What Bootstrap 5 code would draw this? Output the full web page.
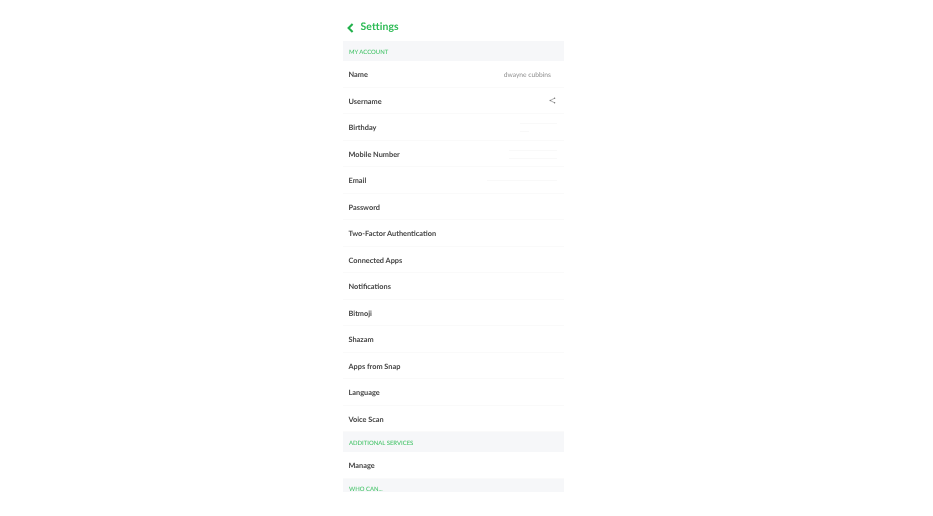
<!DOCTYPE html>
<html lang="en">
<head>
<meta charset="utf-8">
<title>Settings</title>
<link href="https://cdn.jsdelivr.net/npm/bootstrap@5.3.0/dist/css/bootstrap.min.css" rel="stylesheet">
<style>
html,body{height:516px;overflow:hidden;background:#fff}
body{font-family:"Lato","Noto Sans",sans-serif;text-rendering:geometricPrecision}
.phone-pane{width:221px;margin-left:343px;height:492px;overflow:hidden;filter:blur(.25px)}
.top-bar{height:41px;padding:14px 0 0 4px;color:#2dbb55}
.top-title{font-size:10.4px;letter-spacing:.1px;font-weight:700;margin-left:6.5px}
.sec-head{background:#f6f7f9;color:#46c46a;font-size:5.95px;height:20px;padding:2px 0 0 6px;line-height:20px;text-transform:uppercase;font-weight:500}
.sec-head-cut{height:14px;line-height:18px}
.set-row{height:26.5px;padding:2px 13px 0 5.5px;color:#444;font-size:7.35px;border-bottom:1px solid #fafafa;font-weight:700}
.set-row:last-of-type{border-bottom:0}
.set-val{color:#8f8f8f;font-size:6.7px;font-weight:400}
.share-ico{margin-right:-5px;margin-top:-2px}
.ghost-stack{gap:7px;margin-right:-6px}
.ghost-txt{display:block;height:1px;background:#f9f9f9}
.gw-a{width:37px}
.gw-b{width:9px}
.gw-c{width:48px}
.gw-d{width:70px}
</style>
</head>
<body>
<main class="phone-pane">
  <div class="top-bar d-flex align-items-center">
    <svg width="7" height="10" viewBox="0 0 7 10" aria-hidden="true"><path d="M5.6 1 1.6 5l4 4" fill="none" stroke="#22b14c" stroke-width="2.1"/></svg>
    <span class="top-title">Settings</span>
  </div>
  <div class="sec-head">My Account</div>
  <div class="set-row d-flex align-items-center justify-content-between"><span>Name</span><span class="set-val">dwayne cubbins</span></div>
  <div class="set-row d-flex align-items-center justify-content-between"><span>Username</span>
    <svg class="share-ico" width="7" height="7" viewBox="0 0 7 7" aria-hidden="true"><path d="M5.6 1.2 1.2 3.5 5.6 5.8" fill="none" stroke="#777" stroke-width=".6"/><circle cx="5.6" cy="1.2" r=".7" fill="#777"/><circle cx="1.2" cy="3.5" r=".7" fill="#777"/><circle cx="5.6" cy="5.8" r=".7" fill="#777"/></svg></div>
  <div class="set-row d-flex align-items-center justify-content-between"><span>Birthday</span>
    <div class="ghost-stack d-flex flex-column align-items-start"><i class="ghost-txt gw-a"></i><i class="ghost-txt gw-b"></i></div></div>
  <div class="set-row d-flex align-items-center justify-content-between"><span>Mobile Number</span>
    <div class="ghost-stack d-flex flex-column align-items-start"><i class="ghost-txt gw-c"></i><i class="ghost-txt gw-c"></i></div></div>
  <div class="set-row d-flex align-items-center justify-content-between"><span>Email</span>
    <div class="ghost-stack d-flex flex-column align-items-start"><i class="ghost-txt gw-d"></i></div></div>
  <div class="set-row d-flex align-items-center"><span>Password</span></div>
  <div class="set-row d-flex align-items-center"><span>Two-Factor Authentication</span></div>
  <div class="set-row d-flex align-items-center"><span>Connected Apps</span></div>
  <div class="set-row d-flex align-items-center"><span>Notifications</span></div>
  <div class="set-row d-flex align-items-center"><span>Bitmoji</span></div>
  <div class="set-row d-flex align-items-center"><span>Shazam</span></div>
  <div class="set-row d-flex align-items-center"><span>Apps from Snap</span></div>
  <div class="set-row d-flex align-items-center"><span>Language</span></div>
  <div class="set-row d-flex align-items-center"><span>Voice Scan</span></div>
  <div class="sec-head">Additional Services</div>
  <div class="set-row d-flex align-items-center"><span>Manage</span></div>
  <div class="sec-head sec-head-cut">Who Can...</div>
</main>
<script src="https://cdn.jsdelivr.net/npm/bootstrap@5.3.0/dist/js/bootstrap.bundle.min.js"></script>
</body>
</html>
